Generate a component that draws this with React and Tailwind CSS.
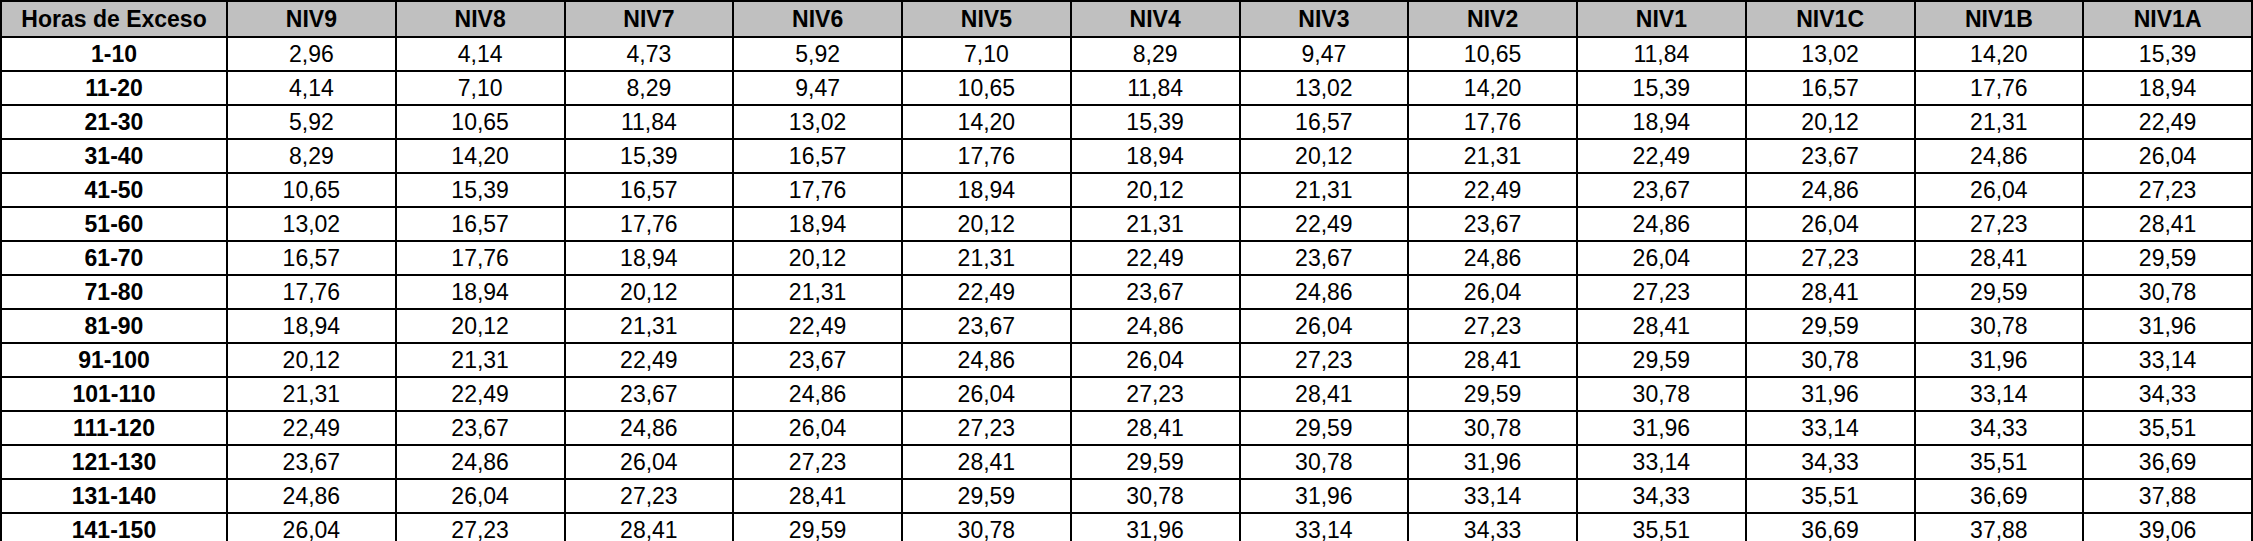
const headers = ['NIV9', 'NIV8', 'NIV7', 'NIV6', 'NIV5', 'NIV4', 'NIV3', 'NIV2', 'NIV1', 'NIV1C', 'NIV1B', 'NIV1A'];

const rows = [
  ['1-10', '2,96 4,14 4,73 5,92 7,10 8,29 9,47 10,65 11,84 13,02 14,20 15,39'],
  ['11-20', '4,14 7,10 8,29 9,47 10,65 11,84 13,02 14,20 15,39 16,57 17,76 18,94'],
  ['21-30', '5,92 10,65 11,84 13,02 14,20 15,39 16,57 17,76 18,94 20,12 21,31 22,49'],
  ['31-40', '8,29 14,20 15,39 16,57 17,76 18,94 20,12 21,31 22,49 23,67 24,86 26,04'],
  ['41-50', '10,65 15,39 16,57 17,76 18,94 20,12 21,31 22,49 23,67 24,86 26,04 27,23'],
  ['51-60', '13,02 16,57 17,76 18,94 20,12 21,31 22,49 23,67 24,86 26,04 27,23 28,41'],
  ['61-70', '16,57 17,76 18,94 20,12 21,31 22,49 23,67 24,86 26,04 27,23 28,41 29,59'],
  ['71-80', '17,76 18,94 20,12 21,31 22,49 23,67 24,86 26,04 27,23 28,41 29,59 30,78'],
  ['81-90', '18,94 20,12 21,31 22,49 23,67 24,86 26,04 27,23 28,41 29,59 30,78 31,96'],
  ['91-100', '20,12 21,31 22,49 23,67 24,86 26,04 27,23 28,41 29,59 30,78 31,96 33,14'],
  ['101-110', '21,31 22,49 23,67 24,86 26,04 27,23 28,41 29,59 30,78 31,96 33,14 34,33'],
  ['111-120', '22,49 23,67 24,86 26,04 27,23 28,41 29,59 30,78 31,96 33,14 34,33 35,51'],
  ['121-130', '23,67 24,86 26,04 27,23 28,41 29,59 30,78 31,96 33,14 34,33 35,51 36,69'],
  ['131-140', '24,86 26,04 27,23 28,41 29,59 30,78 31,96 33,14 34,33 35,51 36,69 37,88'],
  ['141-150', '26,04 27,23 28,41 29,59 30,78 31,96 33,14 34,33 35,51 36,69 37,88 39,06'],
];

export default function App() {
  return (
    <div className="bg-white font-['Liberation_Sans',Arial,sans-serif] text-[23px] leading-none text-black">
      <table className="w-[2253px] table-fixed border-collapse">
        <colgroup>
          <col className="w-[226px]" />
          {headers.map((h) => (
            <col key={h} />
          ))}
        </colgroup>
        <thead>
          <tr className="h-[36px] bg-[#c0c0c0]">
            <th className="border-2 border-black p-0 text-center font-bold">Horas de Exceso</th>
            {headers.map((h) => (
              <th key={h} className="border-2 border-black p-0 text-center font-bold">
                {h}
              </th>
            ))}
          </tr>
        </thead>
        <tbody>
          {rows.map(([range, values]) => (
            <tr key={range} className="h-[34px]">
              <td className="border-2 border-black p-0 text-center font-bold">{range}</td>
              {values.split(' ').map((v, i) => (
                <td key={i} className="border-2 border-black p-0 text-center">
                  {v}
                </td>
              ))}
            </tr>
          ))}
        </tbody>
      </table>
    </div>
  );
}
